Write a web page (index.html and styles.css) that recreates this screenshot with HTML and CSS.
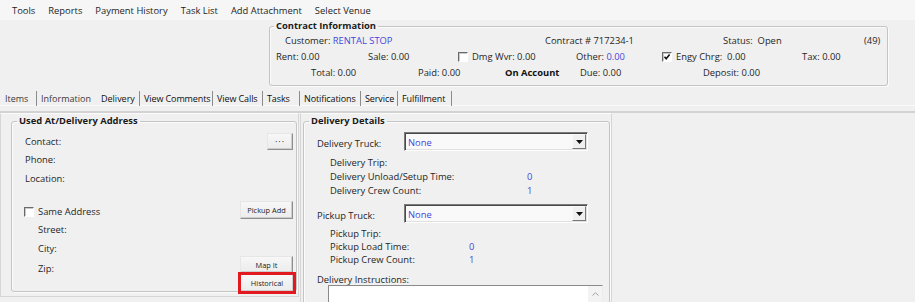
FILE: index.html
```html
<!DOCTYPE html>
<html>
<head>
<meta charset="utf-8">
<link rel="stylesheet" href="styles.css">
</head>
<body>
<div class="menubar">
  <span>Tools</span><span>Reports</span><span>Payment History</span><span>Task List</span><span>Add Attachment</span><span>Select Venue</span>
</div>

<fieldset class="group contract">
  <legend>Contract Information</legend>
  <div class="crow r1">
    <span>Customer: <span class="blue">RENTAL STOP</span></span>
    <span>Contract # 717234-1</span>
    <span>Status:&nbsp; Open</span>
    <span>(49)</span>
  </div>
  <div class="crow r2">
    <span>Rent: 0.00</span>
    <span>Sale: 0.00</span>
    <span class="chk-item"><span class="chk"></span>Dmg Wvr: 0.00</span>
    <span>Other: <span class="blue">0.00</span></span>
    <span class="chk-item"><span class="chk"><svg viewBox="0 0 8 8" width="8" height="8"><polyline points="1.5,3.8 3.2,5.8 6.6,1.6" fill="none" stroke="#111" stroke-width="1.6"/></svg></span>Engy Chrg:&nbsp; 0.00</span>
    <span>Tax: 0.00</span>
  </div>
  <div class="crow r3">
    <span>Total: 0.00</span>
    <span>Paid: 0.00</span>
    <span class="bold">On Account</span>
    <span>Due: 0.00</span>
    <span>Deposit: 0.00</span>
  </div>
</fieldset>

<div class="tabs">
  <span class="tab light sep">Items</span>
  <span class="tab light">Information</span>
  <span class="tab sel sep">Delivery</span>
  <span class="tab strong sep">View Comments</span>
  <span class="tab strong sep">View Calls</span>
  <span class="tab strong sep">Tasks</span>
  <span class="tab strong sep">Notifications</span>
  <span class="tab strong sep">Service</span>
  <span class="tab strong sep">Fulfillment</span>
</div>

<div class="page">
  <div class="panel left">
    <fieldset class="group addr">
      <legend>Used At/Delivery Address</legend>
      <div class="addr-grid">
        <span class="lbl c1 r1">Contact:</span>
        <button class="btn dots r1">&middot;&middot;&middot;</button>
        <span class="lbl c1 r2">Phone:</span>
        <span class="lbl c1 r3">Location:</span>
        <span class="lbl c1 r5 chk-item"><span class="chk"></span>Same Address</span>
        <button class="btn wide r5">Pickup Add</button>
        <span class="lbl c2 r6">Street:</span>
        <span class="lbl c2 r7">City:</span>
        <span class="lbl c2 r8 zip">Zip:</span>
        <button class="btn wide r8 mapit">Map It</button>
        <button class="btn wide r9 hist">Historical</button>
      </div>
    </fieldset>
  </div>
  <div class="panel right">
    <fieldset class="group details">
      <legend>Delivery Details</legend>
      <div class="truck-row">
        <span class="truck-lbl">Delivery Truck:</span>
        <div class="select"><span class="blue">None</span><span class="arrow"><svg viewBox="0 0 7 4" width="7" height="4"><polygon points="0,0 7,0 3.5,4" fill="#111"/></svg></span></div>
      </div>
      <div class="sub dsub">
        <span>Delivery Trip:</span><span></span>
        <span>Delivery Unload/Setup Time:</span><span class="blue">0</span>
        <span>Delivery Crew Count:</span><span class="blue">1</span>
      </div>
      <div class="truck-row pickup">
        <span class="truck-lbl">Pickup Truck:</span>
        <div class="select"><span class="blue">None</span><span class="arrow"><svg viewBox="0 0 7 4" width="7" height="4"><polygon points="0,0 7,0 3.5,4" fill="#111"/></svg></span></div>
      </div>
      <div class="sub psub">
        <span>Pickup Trip:</span><span></span>
        <span>Pickup Load Time:</span><span class="blue">0</span>
        <span>Pickup Crew Count:</span><span class="blue">1</span>
      </div>
      <div class="instr-lbl">Delivery Instructions:</div>
      <div class="textarea"><span class="scroll"><svg viewBox="0 0 7 4" width="7" height="4"><polyline points="0.5,3.5 3.5,0.8 6.5,3.5" fill="none" stroke="#a0a0a0" stroke-width="1"/></svg></span></div>
    </fieldset>
  </div>
</div>
</body>
</html>
```

FILE: styles.css
```css
* { box-sizing: border-box; }

body {
  margin: 0;
  width: 915px;
  height: 302px;
  overflow: hidden;
  background: #f0f0f0;
  font-family: "Open Sans", "Segoe UI", sans-serif;
  font-size: 9.4px;
  color: #262626;
}

.blue { color: #4646da; }
.bold { font-weight: 700; color: #111; }

.menubar {
  height: 20px;
  background: #f6f6f6;
  display: flex;
  align-items: center;
  gap: 13px;
  padding-left: 12px;
  color: #1e1e1e;
}

.group {
  margin: 0;
  padding: 0;
  min-width: 0;
  border: 1px solid #c4c4c4;
  border-radius: 3px;
  box-shadow: inset 1px 1px 0 #fbfbfb, 1px 1px 0 #fbfbfb;
}

.group legend {
  font-weight: 700;
  color: #1a1a1a;
  padding: 0 2px;
  margin-left: 5px;
  line-height: 12px;
}

.contract {
  margin: 0 0 0 269px;
  width: 619px;
  height: 66px;
}
.contract legend { margin-left: 4px; }

.crow {
  display: grid;
  line-height: 16px;
  white-space: nowrap;
}
.r1.crow { grid-template-columns: 260px 178px 141px auto; padding-left: 15px; margin-top: 1px; }
.r2.crow { grid-template-columns: 92px 90px 118px 86px 140px auto; padding-left: 6px; }
.r3.crow { grid-template-columns: 107px 87px 75px 123px auto; padding-left: 41px; }

.chk-item { display: flex; align-items: center; }
.chk {
  width: 10px;
  height: 10px;
  margin-right: 4px;
  background: #fff;
  border: 1px solid;
  border-color: #6a6a6a #ffffff #ffffff #6a6a6a;
  box-shadow: inset 1px 1px 0 #c8c8c8;
  display: flex;
  align-items: center;
  justify-content: center;
}

.tabs {
  margin-top: 3px;
  display: grid;
  grid-template-columns: 37px 60px 43px 73px 50px 37px 61px 37px 54px;
  height: 17px;
  border-bottom: 1px solid #fafafa;
}
.tab {
  padding-left: 4px;
  line-height: 15px;
  height: 15px;
  margin-top: 2px;
  white-space: nowrap;
  color: #1e1e1e;
  font-size: 9px;
}
.tab.sep { border-right: 1px solid #8c8c8c; }
.tab.light { color: #3a3a3a; }
.tab.sel { color: #111; }
.tab.strong { color: #0e0e0e; letter-spacing: -0.1px; }
.tab:first-child { padding-left: 5px; }

.page {
  margin-top: 5px;
  border-top: 2px solid #d2d2d2;
  display: flex;
  gap: 1px;
}

.panel {
  border: 1px solid #d6d6d6;
  border-top-color: #fbfbfb;
}
.panel.left {
  width: 299px;
  height: 184px;
  padding: 1px 1px 0 10px;
}
.panel.right {
  width: 312px;
  height: 200px;
  padding: 1px 1px 0 2px;
}

.addr { height: 177px; }

.addr-grid {
  display: grid;
  grid-template-columns: 1fr auto;
  grid-template-rows: 18px 18px 19px 14px 19px 18px 19px 17px 18px;
  padding: 5px 3px 0 0;
}
.lbl { grid-column: 1; align-self: center; line-height: 14px; padding-top: 2px; }
.c1 { padding-left: 13px; }
.c2 { padding-left: 26px; }
.lbl.chk-item { padding-left: 12px; }
.r1 { grid-row: 1; }
.r2 { grid-row: 2; }
.r3 { grid-row: 3; }
.r5 { grid-row: 5; }
.r6 { grid-row: 6; }
.r7 { grid-row: 7; }
.r8 { grid-row: 8; }
.r9 { grid-row: 9; }
.zip { align-self: end; margin-bottom: -2px; }

.btn {
  grid-column: 2;
  justify-self: end;
  font-family: inherit;
  font-size: 7.4px;
  color: #222;
  padding: 0;
  background: linear-gradient(#f7f7f7, #ececec);
  border: 1px solid;
  border-color: #e6e6e6 #8e8e8e #8e8e8e #e6e6e6;
  box-shadow: inset -1px -1px 0 #cdcdcd;
}
.btn.dots { width: 26px; height: 17px; margin-top: 1px; font-size: 9px; letter-spacing: 1px; }
.btn.wide { width: 53px; height: 18px; }
.btn.mapit { height: 17px; margin-top: -1px; }
.btn.hist {
  width: 54px;
  margin-right: -1px;
  outline: 3px solid #e31920;
  outline-offset: -1px;
}

.details { height: 300px; }

.truck-row {
  display: flex;
  align-items: center;
  padding: 5px 0 0 13px;
  height: 24px;
}
.truck-row.pickup { padding-top: 0; height: 19px; margin-top: 6px; }
.truck-lbl { width: 87px; padding-top: 4px; }

.select {
  width: 184px;
  height: 19px;
  display: flex;
  align-items: center;
  justify-content: space-between;
  padding-left: 3px;
  padding-top: 2px;
  background: #f9f9f9;
  border: 1px solid;
  border-color: #7a7a7a #ffffff #ffffff #7a7a7a;
  box-shadow: inset 1px 1px 0 #4a4a4a, inset -1px -1px 0 #e0e0e0;
}
.select .arrow {
  width: 14px;
  height: 15px;
  margin-right: 1px;
  margin-top: -2px;
  background: #f0f0f0;
  border: 1px solid;
  border-color: #fafafa #7a7a7a #7a7a7a #fafafa;
  display: flex;
  align-items: center;
  justify-content: center;
}

.sub {
  display: grid;
  padding-left: 26px;
  white-space: nowrap;
}
.dsub { grid-template-columns: 197px auto; line-height: 14px; margin-top: 5px; }
.psub { grid-template-columns: 139px auto; line-height: 13px; margin-top: 4px; }

.instr-lbl {
  padding-left: 13px;
  line-height: 12px;
  margin-top: 8px;
}

.textarea {
  margin: -1px 0 0 24px;
  width: 275px;
  height: 40px;
  background: #fff;
  border: 1px solid;
  border-color: #8a8a8a #ececec #ececec #8a8a8a;
  display: flex;
  justify-content: flex-end;
}
.scroll {
  width: 14px;
  background: #f3f3f3;
  display: flex;
  justify-content: center;
  padding-top: 6px;
}
```
